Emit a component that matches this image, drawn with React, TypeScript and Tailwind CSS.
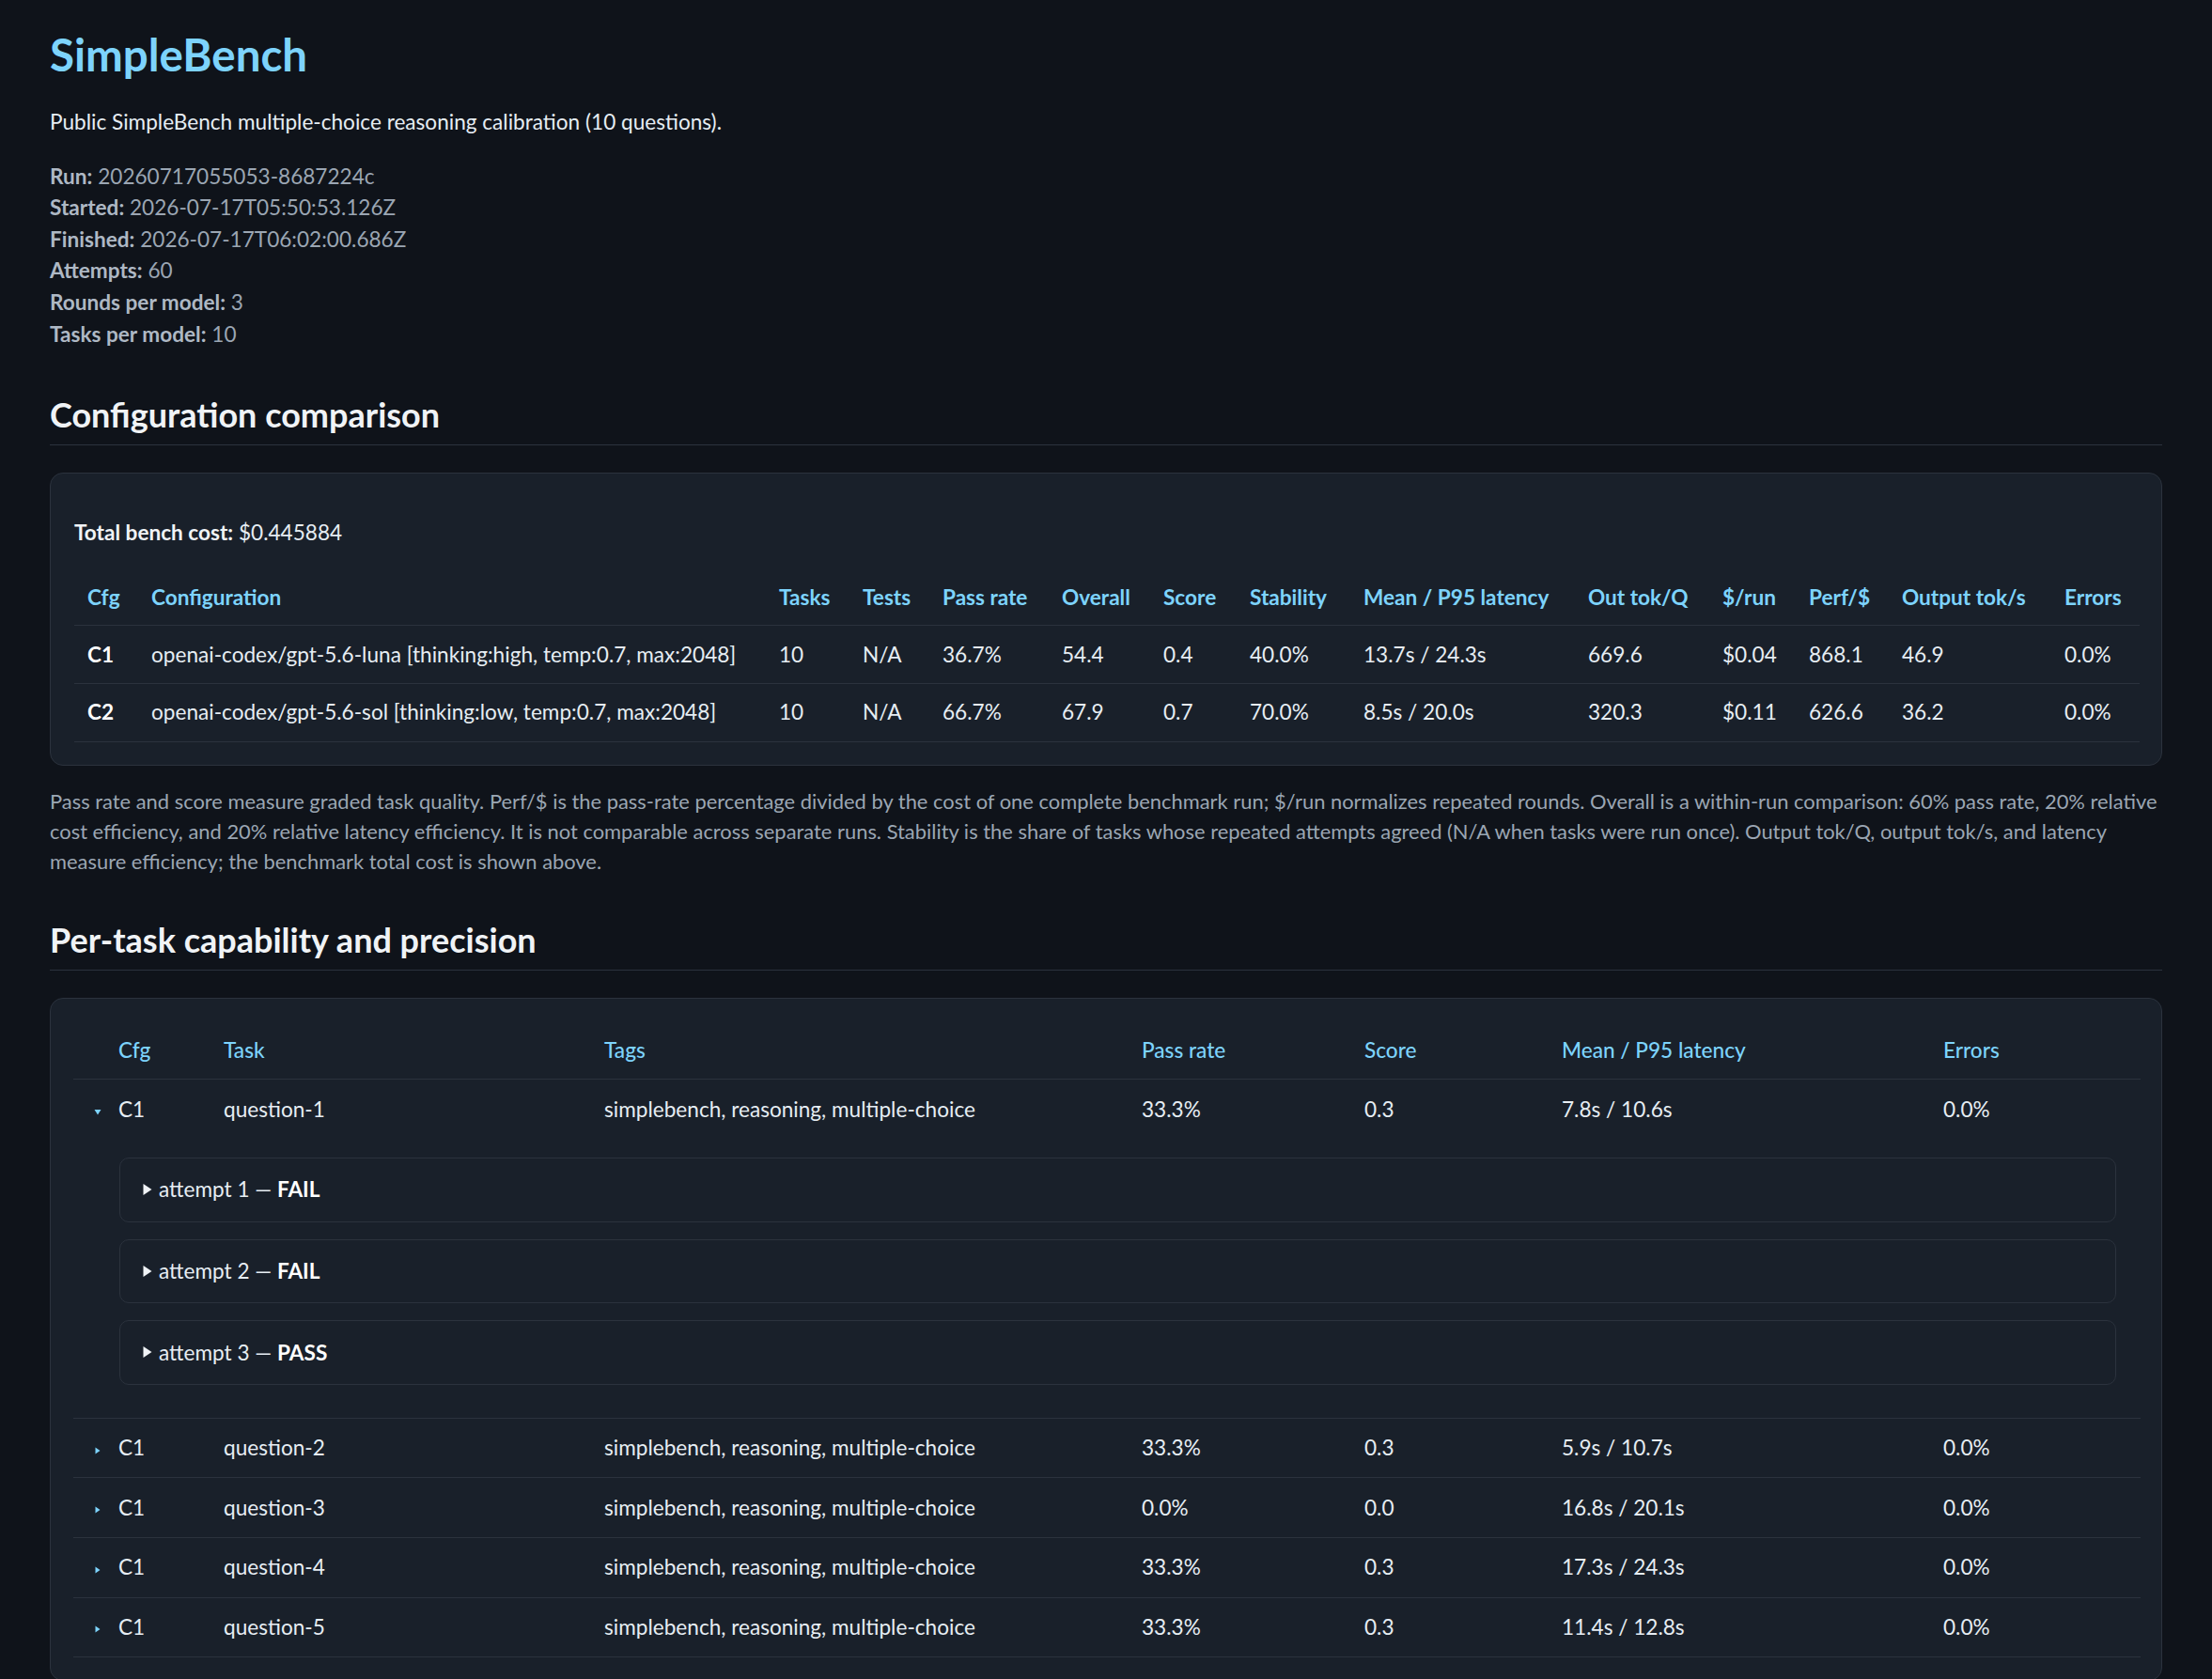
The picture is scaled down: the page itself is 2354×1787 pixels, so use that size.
import React from "react";

const meta = [
  { label: "Run:", value: "20260717055053-8687224c" },
  { label: "Started:", value: "2026-07-17T05:50:53.126Z" },
  { label: "Finished:", value: "2026-07-17T06:02:00.686Z" },
  { label: "Attempts:", value: "60" },
  { label: "Rounds per model:", value: "3" },
  { label: "Tasks per model:", value: "10" },
];

const configHeaders = [
  "Cfg",
  "Configuration",
  "Tasks",
  "Tests",
  "Pass rate",
  "Overall",
  "Score",
  "Stability",
  "Mean / P95 latency",
  "Out tok/Q",
  "$/run",
  "Perf/$",
  "Output tok/s",
  "Errors",
];
const configWidths = [68, 668, 89, 85, 127, 108, 92, 121, 239, 143, 92, 99, 173, 94];

const configRows = [
  {
    id: "C1",
    cells: [
      "openai-codex/gpt-5.6-luna [thinking:high, temp:0.7, max:2048]",
      "10",
      "N/A",
      "36.7%",
      "54.4",
      "0.4",
      "40.0%",
      "13.7s / 24.3s",
      "669.6",
      "$0.04",
      "868.1",
      "46.9",
      "0.0%",
    ],
  },
  {
    id: "C2",
    cells: [
      "openai-codex/gpt-5.6-sol [thinking:low, temp:0.7, max:2048]",
      "10",
      "N/A",
      "66.7%",
      "67.9",
      "0.7",
      "70.0%",
      "8.5s / 20.0s",
      "320.3",
      "$0.11",
      "626.6",
      "36.2",
      "0.0%",
    ],
  },
];

const taskWidths = [34, 112, 405, 572, 237, 210, 406, 224];
const taskHeaders = ["", "Cfg", "Task", "Tags", "Pass rate", "Score", "Mean / P95 latency", "Errors"];
const tags = "simplebench, reasoning, multiple-choice";

const tasks = [
  { cfg: "C1", task: "question-1", pass: "33.3%", score: "0.3", latency: "7.8s / 10.6s", errors: "0.0%", open: true },
  { cfg: "C1", task: "question-2", pass: "33.3%", score: "0.3", latency: "5.9s / 10.7s", errors: "0.0%" },
  { cfg: "C1", task: "question-3", pass: "0.0%", score: "0.0", latency: "16.8s / 20.1s", errors: "0.0%" },
  { cfg: "C1", task: "question-4", pass: "33.3%", score: "0.3", latency: "17.3s / 24.3s", errors: "0.0%" },
  { cfg: "C1", task: "question-5", pass: "33.3%", score: "0.3", latency: "11.4s / 12.8s", errors: "0.0%" },
];

const attempts = [
  { n: 1, result: "FAIL" },
  { n: 2, result: "FAIL" },
  { n: 3, result: "PASS" },
];

const Toggle = ({ open }: { open?: boolean }) => (
  <svg width="10" height="12" viewBox="0 0 10 12" className="inline-block">
    {open ? <path d="M1.5 4 L8.5 4 L5 9.5 Z" fill="#7dd3fc" /> : <path d="M2.5 2.5 L7.5 6 L2.5 9.5 Z" fill="#7dd3fc" />}
  </svg>
);

const SectionTitle = ({ children, className = "mt-[50px]" }: { children: React.ReactNode; className?: string }) => (
  <h2
    className={`${className} mb-[29px] border-b border-[#2b323d] pb-[12px] text-[36px] leading-[39px] font-bold text-[#f0f3f6]`}
  >
    {children}
  </h2>
);

export default function App() {
  return (
    <div className="min-h-screen bg-[#0f131a] px-[53px] pt-[31px] pb-[40px] font-['Lato','Liberation_Sans',sans-serif] text-[22.6px] leading-[33.6px] text-[#e6edf3]">
      <h1 className="text-[47.5px] leading-[54px] font-bold text-[#7dd3fc]">SimpleBench</h1>
      <p className="mt-[28px]">Public SimpleBench multiple-choice reasoning calibration (10 questions).</p>

      <div className="mt-[24px] text-[#9ba6b3]">
        {meta.map((m) => (
          <div key={m.label}>
            <span className="font-bold text-[#aeb8c4]">{m.label}</span> {m.value}
          </div>
        ))}
      </div>

      <SectionTitle>Configuration comparison</SectionTitle>

      <div className="rounded-[14px] border border-[#2b323d] bg-[#19202a] px-[25px] pt-[24px] pb-[24px]">
        <p className="mt-[22px] mb-[22px]">
          <span className="font-bold text-[#f0f3f6]">Total bench cost:</span> $0.445884
        </p>
        <table className="w-full table-fixed border-collapse text-left">
          <colgroup>
            {configWidths.map((w, i) => (
              <col key={i} style={{ width: w }} />
            ))}
          </colgroup>
          <thead>
            <tr className="border-b border-[#2b323d]">
              {configHeaders.map((h) => (
                <th key={h} className="px-[14px] py-[13px] font-bold whitespace-nowrap text-[#7dd3fc]">
                  {h}
                </th>
              ))}
            </tr>
          </thead>
          <tbody>
            {configRows.map((r) => (
              <tr key={r.id} className="border-b border-[#2b323d]">
                <td className="px-[14px] py-[13.5px] font-bold text-white">{r.id}</td>
                {r.cells.map((c, i) => (
                  <td key={i} className="px-[14px] py-[13.5px] whitespace-nowrap text-[#e6edf3]">
                    {c}
                  </td>
                ))}
              </tr>
            ))}
          </tbody>
        </table>
      </div>

      <p className="mt-[22px] text-[21.9px] leading-[32.4px] text-[#9ba6b3]">
        Pass rate and score measure graded task quality. Perf/$ is the pass-rate percentage divided by the cost of one
        complete benchmark run; $/run normalizes repeated rounds. Overall is a within-run comparison: 60% pass rate, 20%
        relative cost efficiency, and 20% relative latency efficiency. It is not comparable across separate runs.
        Stability is the share of tasks whose repeated attempts agreed (N/A when tasks were run once). Output tok/Q,
        output tok/s, and latency measure efficiency; the benchmark total cost is shown above.
      </p>

      <SectionTitle className="mt-[47px]">Per-task capability and precision</SectionTitle>

      <div className="rounded-[14px] border border-[#2b323d] bg-[#19202a] px-[24px] pt-[24px] pb-[24px]">
        <table className="w-full table-fixed border-collapse text-left">
          <colgroup>
            {taskWidths.map((w, i) => (
              <col key={i} style={{ width: w }} />
            ))}
          </colgroup>
          <thead>
            <tr className="border-b border-[#2b323d]">
              {taskHeaders.map((h, i) => (
                <th key={i} className="px-[14px] py-[14px] font-medium whitespace-nowrap text-[#7dd3fc]">
                  {h}
                </th>
              ))}
            </tr>
          </thead>
          <tbody>
            {tasks.map((t) => (
              <React.Fragment key={t.task}>
                <tr className={t.open ? "" : "border-b border-[#2b323d]"}>
                  <td className="py-[14.5px] pl-[21px]">
                    <Toggle open={t.open} />
                  </td>
                  <td className="px-[14px] py-[14.5px]">{t.cfg}</td>
                  <td className="px-[14px] py-[14.5px]">{t.task}</td>
                  <td className="px-[14px] py-[14.5px] whitespace-nowrap">{tags}</td>
                  <td className="px-[14px] py-[14.5px]">{t.pass}</td>
                  <td className="px-[14px] py-[14.5px]">{t.score}</td>
                  <td className="px-[14px] py-[14.5px]">{t.latency}</td>
                  <td className="px-[14px] py-[14.5px]">{t.errors}</td>
                </tr>
                {t.open && (
                  <tr className="border-b border-[#2b323d]">
                    <td colSpan={8} className="pt-[20px] pb-[35px] pl-[49px] pr-[26px]">
                      <div className="flex flex-col gap-[18px]">
                        {attempts.map((a) => (
                          <div
                            key={a.n}
                            className="flex items-center gap-[6px] rounded-[10px] border border-[#2b323d] bg-[#19202a] px-[23px] py-[16.5px]"
                          >
                            <svg width="12" height="16" viewBox="0 0 12 16">
                              <path d="M1.5 2 L10.5 8 L1.5 14 Z" fill="#f0f3f6" />
                            </svg>
                            <span>
                              attempt {a.n} — <span className="font-bold text-white">{a.result}</span>
                            </span>
                          </div>
                        ))}
                      </div>
                    </td>
                  </tr>
                )}
              </React.Fragment>
            ))}
          </tbody>
        </table>
      </div>
    </div>
  );
}
